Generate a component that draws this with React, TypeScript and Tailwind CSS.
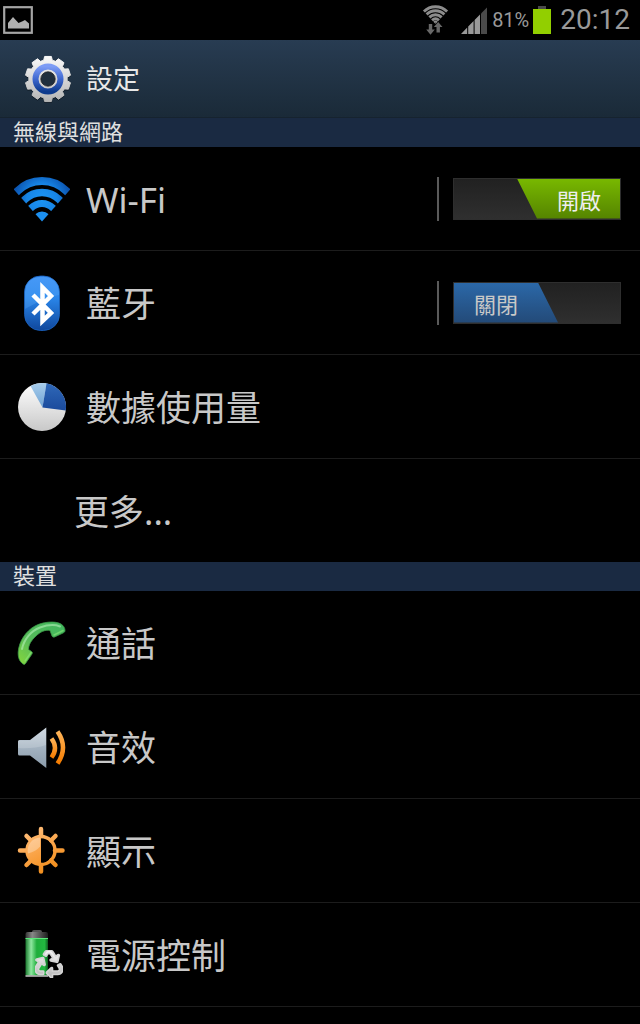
import { useState } from 'react'
import type { ReactNode } from 'react'
import { FaRecycle } from 'react-icons/fa'

function PictureIcon() {
  return (
    <svg width="30" height="28" viewBox="0 0 30 28">
      <rect x="1.2" y="1.2" width="27.6" height="25.6" fill="none" stroke="#a5a5a5" strokeWidth="2.2" />
      <path d="M5 22.500V17l5-6 5.500 6 3.500-1.500 3-1.500 4 3.500v5z" fill="#b0b0b0" />
    </svg>
  )
}

function WifiStatusIcon() {
  return (
    <svg width="27" height="30" viewBox="0 0 27 30">
      <clipPath id="status-fan">
        <path d="M13.500 19L-1 3.500V-2h29v5.500z" />
      </clipPath>
      <g clipPath="url(#status-fan)" fill="none" stroke="#8c8c8c" strokeWidth="2.900">
        <circle cx="13.500" cy="18" r="16.300" />
        <circle cx="13.500" cy="18" r="12.300" />
        <circle cx="13.500" cy="18" r="8.300" />
        <circle cx="13.500" cy="18" r="4.300" />
        <circle cx="13.500" cy="18" r="1" />
      </g>
      <g fill="#686868">
        <path d="M6.800 19h3.400v5.500h2.600l-4.300 5.200-4.300-5.200h2.600z" />
        <path d="M14.500 27.500v-5.500h-2.600l4.300-5 4.300 5h-2.600v5.500z" />
      </g>
    </svg>
  )
}

function SignalIcon() {
  return (
    <svg width="27" height="28" viewBox="0 0 27 28">
      <path d="M0 28l6.200-6.500V28z M7.200 20.500l5.400-5.500V28H7.200z M13.600 14l5.400-5.500V28h-5.400z" fill="#999" />
      <path d="M20 7.500l6-6V28h-6z" fill="#4a4a4a" />
    </svg>
  )
}

function BatteryStatusIcon() {
  return (
    <svg width="18" height="28" viewBox="0 0 18 28">
      <rect x="5" y="0" width="8" height="3" fill="#4a4a4a" />
      <rect x="0" y="3" width="18" height="25" fill="#92cf00" />
    </svg>
  )
}

// 10 teeth, drawn as one outline around the centre
const gearPath = Array.from({ length: 10 }, (_, i) =>
  [
    [-13, 19.2],
    [-8.5, 22.8],
    [8.5, 22.8],
    [13, 19.2],
  ]
    .map(([deg, r]) => {
      const a = ((i * 36 + deg - 90) * Math.PI) / 180
      return `${(24 + r * Math.cos(a)).toFixed(2)} ${(24 + r * Math.sin(a)).toFixed(2)}`
    })
    .join('L'),
).join('L')

function GearIcon() {
  return (
    <svg width="48" height="48" viewBox="0 0 48 48">
      <defs>
        <linearGradient id="gear-body" x2="0" y2="1">
          <stop offset="0" stopColor="#fafafa" />
          <stop offset="1" stopColor="#b4b4b4" />
        </linearGradient>
        <linearGradient id="gear-ring" x2="0" y2="1">
          <stop offset="0" stopColor="#7d9cf5" />
          <stop offset="0.5" stopColor="#3f68d0" />
          <stop offset="1" stopColor="#0d3a8c" />
        </linearGradient>
      </defs>
      <path d={`M${gearPath}z`} transform="translate(0 1)" fill="#0c141c" opacity="0.6" strokeLinejoin="round" stroke="#0c141c" />
      <path
        d={`M${gearPath}z`}
        fill="url(#gear-body)"
        stroke="url(#gear-body)"
        strokeLinejoin="round"
      />
      <circle cx="24" cy="24" r="12.500" fill="none" stroke="url(#gear-ring)" strokeWidth="6" />
      <circle cx="24" cy="24" r="7.200" fill="#1f2e3d" stroke="#222" strokeWidth="0.800" />
    </svg>
  )
}

function WifiIcon() {
  return (
    <svg width="56" height="56" viewBox="0 0 56 56">
      <defs>
        <radialGradient id="wifi-blue" gradientUnits="userSpaceOnUse" cx="28" cy="28" r="30">
          <stop offset="0" stopColor="#1c96f5" />
          <stop offset="0.500" stopColor="#1785e6" />
          <stop offset="1" stopColor="#0a4da8" />
        </radialGradient>
        <clipPath id="wifi-fan">
          <path d="M28 50.500L-6 12V-4h68v16z" />
        </clipPath>
      </defs>
      <g clipPath="url(#wifi-fan)" fill="none" stroke="url(#wifi-blue)">
        <circle cx="28" cy="45" r="35" strokeWidth="8" />
        <circle cx="28" cy="46" r="24.500" strokeWidth="7.500" />
        <circle cx="28" cy="48" r="15.500" strokeWidth="7" />
        <circle cx="28" cy="50" r="9.500" fill="#1c90f0" stroke="none" />
      </g>
    </svg>
  )
}

function BluetoothIcon() {
  return (
    <svg width="56" height="56" viewBox="0 0 56 56">
      <defs>
        <linearGradient id="bt-pill" x2="0" y2="1">
          <stop offset="0" stopColor="#3a8ef5" />
          <stop offset="0.400" stopColor="#2a86ea" />
          <stop offset="1" stopColor="#0f479c" />
        </linearGradient>
      </defs>
      <rect x="10.500" y="1" width="35" height="54.500" rx="16" fill="url(#bt-pill)" stroke="#1c66c4" strokeWidth="0.800" />
      <path d="M11 30V17Q11 2 27 2h3Q45 2 45 17v3Q32 22 11 34z" fill="#6cb6ff" opacity="0.250" />
      <path d="M19 20L37 38 28.500 46V12.500L37 21 19 39" fill="none" stroke="#fff" strokeWidth="4.500" />
    </svg>
  )
}

function PieIcon() {
  return (
    <svg width="56" height="56" viewBox="0 0 56 56">
      <defs>
        <linearGradient id="pie-white" x2="0" y2="1">
          <stop offset="0" stopColor="#fff" />
          <stop offset="1" stopColor="#c8c8c8" />
        </linearGradient>
        <linearGradient id="pie-light" x2="0" y2="1">
          <stop offset="0" stopColor="#a8cdec" />
          <stop offset="1" stopColor="#6fa3d4" />
        </linearGradient>
        <linearGradient id="pie-blue" x2="0" y2="1">
          <stop offset="0" stopColor="#2f68b8" />
          <stop offset="1" stopColor="#1a4a9c" />
        </linearGradient>
      </defs>
      <circle cx="28" cy="28" r="24" fill="url(#pie-white)" />
      <path d="M28.500 28.500L16.500 7A24 24 0 0 1 32.500 4.300z" fill="url(#pie-light)" />
      <path d="M28.500 28.500L32.500 4.300A24 24 0 0 1 51.800 31.500z" fill="url(#pie-blue)" />
    </svg>
  )
}

function PhoneIcon() {
  return (
    <svg width="56" height="56" viewBox="0 0 56 56">
      <defs>
        <linearGradient id="phone-green" x1="1" x2="0" y2="1">
          <stop offset="0" stopColor="#3fb860" />
          <stop offset="0.600" stopColor="#58bb5a" />
          <stop offset="1" stopColor="#86d83c" />
        </linearGradient>
      </defs>
      <path
        d="M9 49C5 46 4 42 4.200 37C5 26 12 16 21 11C28 7 41 5.500 47 9C49.500 10.500 51 13 51 15.500C51 17 50 17.500 48 18.500L40.500 22Q38.500 22.500 38 21L36 15.500C31 14.500 26 17 22 21C17 25.500 14.500 30 14.500 34.500L17.500 36.500Q19 37.500 18 39L11.500 48.500Q10.500 50 9 49z"
        fill="url(#phone-green)"
        stroke="#3c9a48"
        strokeWidth="0.800"
      />
      <path d="M8 34C10 24 17 16 26 12.500C33 10 41 9.500 46 11.500" fill="none" stroke="#b4f0b8" strokeWidth="2" strokeLinecap="round" opacity="0.600" />
      <path d="M40 20l9-4.500M11 46l6-8.500" stroke="#8ae878" strokeWidth="1.500" strokeLinecap="round" opacity="0.600" />
    </svg>
  )
}

function SpeakerIcon() {
  return (
    <svg width="56" height="56" viewBox="0 0 56 56">
      <defs>
        <linearGradient id="speaker-steel" x2="0" y2="1">
          <stop offset="0" stopColor="#c8d4de" />
          <stop offset="0.500" stopColor="#a3b2c0" />
          <stop offset="1" stopColor="#8c9dac" />
        </linearGradient>
        <linearGradient id="speaker-wave" x2="0" y2="1">
          <stop offset="0" stopColor="#ffb458" />
          <stop offset="1" stopColor="#f57c00" />
        </linearGradient>
      </defs>
      <path d="M5.500 21H16L32.300 8.500v40.500L16 36.500H5.500Q4 36.500 4 35V22.500Q4 21 5.500 21z" fill="url(#speaker-steel)" />
      <path d="M4 21.500H16L32 9v17Q20 30 4 29z" fill="#fff" opacity="0.180" />
      <path d="M37.500 19.500Q44.500 29 37.500 38.500" fill="none" stroke="url(#speaker-wave)" strokeWidth="4.500" />
      <path d="M43.500 12.500Q54.500 28.500 43.500 44.500" fill="none" stroke="url(#speaker-wave)" strokeWidth="4.500" />
    </svg>
  )
}

function SunIcon() {
  return (
    <svg width="56" height="56" viewBox="0 0 56 56">
      <defs>
        <linearGradient id="sun-orange" gradientUnits="userSpaceOnUse" x1="12" y1="4" x2="36" y2="50">
          <stop offset="0" stopColor="#ffc080" />
          <stop offset="0.600" stopColor="#f9a040" />
          <stop offset="1" stopColor="#f08c18" />
        </linearGradient>
      </defs>
      <g fill="none" stroke="url(#sun-orange)" strokeWidth="4.500" strokeLinecap="round">
        <path d="M27 6L27.010 13M27 42L27.010 48.500M6 27.500L13 27.510M41 27.500L48.500 27.510" />
        <path d="M12.500 13l4.500 4.500M41.500 13l-4.500 4.500M12.500 42l4.500-4.500M41.500 42l-4.500-4.500" />
      </g>
      <circle cx="27" cy="27.500" r="14" fill="none" stroke="url(#sun-orange)" strokeWidth="3.400" />
      <path d="M27 13a14.500 14.500 0 0 0 0 29z" fill="url(#sun-orange)" />
      <path d="M26 14.500a13 13 0 0 0-12 16q8-2 12-7z" fill="#fff" opacity="0.300" />
    </svg>
  )
}

function PowerIcon() {
  return (
    <svg width="56" height="56" viewBox="0 0 56 56">
      <defs>
        <linearGradient id="cell-green">
          <stop offset="0" stopColor="#1c7a30" />
          <stop offset="0.250" stopColor="#8fe8a0" />
          <stop offset="0.500" stopColor="#1fae3c" />
          <stop offset="0.850" stopColor="#22b840" />
          <stop offset="1" stopColor="#0f5a20" />
        </linearGradient>
        <linearGradient id="cell-cap">
          <stop offset="0" stopColor="#333" />
          <stop offset="0.300" stopColor="#888" />
          <stop offset="1" stopColor="#1c1c1c" />
        </linearGradient>
        <linearGradient id="recycle-grey" x2="0" y2="1">
          <stop offset="0" stopColor="#f4f4f4" />
          <stop offset="1" stopColor="#b8b8b8" />
        </linearGradient>
      </defs>
      <path d="M18 5q0-2 2-2h6q2 0 2 2z" fill="#555" />
      <path d="M11.500 7q0-2 2-2h18.500q2 0 2 2v4h-22.500z" fill="url(#cell-cap)" />
      <rect x="11.500" y="11" width="22.500" height="37.500" fill="url(#cell-green)" />
      <path d="M11.500 11.500h22.500" stroke="#5ce67c" />
      <path d="M11.500 49h22.500" stroke="#c8c8c8" strokeWidth="1.500" />
      <FaRecycle x="21" y="23" size={28} fill="url(#recycle-grey)" stroke="#d4d4d4" strokeWidth={30} strokeLinejoin="round" />
    </svg>
  )
}

function Toggle({ label, initial }: { label: string; initial: boolean }) {
  const [on, setOn] = useState(initial)
  return (
    <div className="mr-[19px] flex h-11 items-center border-l-2 border-[#5a5a5a] pl-[14px]">
      <button
        type="button"
        role="switch"
        aria-checked={on}
        aria-label={label}
        onClick={() => setOn(!on)}
        className={`flex h-[42px] w-[168px] border border-[#2e2e2e] bg-linear-to-b from-[#212121] to-[#2f2f2f] text-[22px] leading-[42px] ${on ? 'justify-end' : 'justify-start'}`}
      >
        {on ? (
          <span className="w-[103px] bg-linear-to-b from-[#78b800] to-[#558400] pr-[19px] text-right text-[#eee] [clip-path:polygon(0_0,100%_0,100%_100%,20px_100%)]">
            開啟
          </span>
        ) : (
          <span className="w-[104px] bg-linear-to-b from-[#2b68a8] to-[#234a78] pl-5 text-left text-[#c8c8c8] [clip-path:polygon(0_0,84px_0,100%_100%,0_100%)]">
            關閉
          </span>
        )}
      </button>
    </div>
  )
}

function Row({ icon, label, children }: { icon?: ReactNode; label: string; children?: ReactNode }) {
  return (
    <li>
      <div className="flex h-[103px] items-center">
        <a href="#" className={`flex h-full flex-1 items-center gap-4 ${icon ? 'pl-[14px]' : 'pl-[74px]'}`}>
          {icon}
          <span className="pt-1">{label}</span>
        </a>
        {children}
      </div>
    </li>
  )
}

function Section({ title, children }: { title: string; children: ReactNode }) {
  return (
    <section>
      <h2 className="h-[29px] bg-[#1a2a42] pl-[13px] text-[22px] leading-[29px] text-[#e0e0e0]">{title}</h2>
      <ul className="divide-y divide-[#1c1c1c] font-['Noto_Sans','Noto_Sans_CJK_TC',sans-serif] text-[35px] text-[#c8c8c8]">
        {children}
      </ul>
    </section>
  )
}

export default function App() {
  return (
    <div className="min-h-screen bg-black font-[Roboto,'Noto_Sans_CJK_TC',sans-serif]">
      <div className="flex h-10 items-center justify-between pr-[10px] pl-[3px] text-[#999]">
        <PictureIcon />
        <div className="flex items-center">
          <WifiStatusIcon />
          <span className="ml-3">
            <SignalIcon />
          </span>
          <span className="ml-1 text-xl">81%</span>
          <span className="ml-1">
            <BatteryStatusIcon />
          </span>
          <span className="ml-[9px] text-[28px]">20:12</span>
        </div>
      </div>

      <header className="flex h-[78px] items-center gap-[14px] border-b border-[#16232f] bg-linear-to-b from-[#283c52] to-[#1a2a38] pl-6">
        <GearIcon />
        <h1 className="pt-1 text-[27px] text-[#e8e8e8]">設定</h1>
      </header>

      <main>
        <Section title="無線與網路">
          <Row icon={<WifiIcon />} label="Wi-Fi">
            <Toggle label="Wi-Fi" initial={true} />
          </Row>
          <Row icon={<BluetoothIcon />} label="藍牙">
            <Toggle label="藍牙" initial={false} />
          </Row>
          <Row icon={<PieIcon />} label="數據使用量" />
          <Row label="更多..." />
        </Section>
        <Section title="裝置">
          <Row icon={<PhoneIcon />} label="通話" />
          <Row icon={<SpeakerIcon />} label="音效" />
          <Row icon={<SunIcon />} label="顯示" />
          <Row icon={<PowerIcon />} label="電源控制" />
        </Section>
        <hr className="border-[#1c1c1c]" />
      </main>
    </div>
  )
}
